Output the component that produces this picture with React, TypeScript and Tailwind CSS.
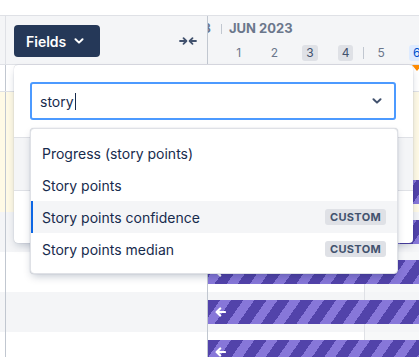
import React from 'react';

type Row = { h: string; bg: string; bar?: boolean; tint?: boolean; today?: boolean };

const rows: Row[] = [
  { h: 'h-[27px] border-b border-[#dfe1e6]', bg: 'bg-white', today: true },
  { h: 'h-[40px]', bg: 'bg-[#fffae6]' },
  { h: 'h-[40px]', bg: 'bg-[#fffae6]' },
  { h: 'h-[40px]', bg: 'bg-[#fffae6]', bar: true },
  { h: 'h-[40px]', bg: 'bg-[#f4f5f7]', bar: true },
  { h: 'h-[40px]', bg: 'bg-white', bar: true, tint: true },
  { h: 'h-[40px]', bg: 'bg-[#f4f5f7]', bar: true },
  { h: 'h-[40px]', bg: 'bg-white', bar: true, tint: true },
];

const days = [
  { n: '1' },
  { n: '2' },
  { n: '3', weekend: true },
  { n: '4', weekend: true },
  { n: '5' },
  { n: '6', today: true },
];

const options = [
  { label: 'Progress (story points)' },
  { label: 'Story points' },
  { label: 'Story points confidence', custom: true, active: true },
  { label: 'Story points median', custom: true },
];

const Chevron = ({ className }: { className?: string }) => (
  <svg width="10" height="6" viewBox="0 0 10 6" className={className} fill="none">
    <path d="M1.5 1.2 5 4.6l3.5-3.4" stroke="currentColor" strokeWidth="2" strokeLinecap="round" strokeLinejoin="round" />
  </svg>
);

const CollapseIcon = () => (
  <svg width="18" height="10" viewBox="0 0 18 10" fill="none" className="text-[#42526e]">
    {/* arrow pointing right */}
    <path d="M1 5h6M4.5 2.2 7.4 5 4.5 7.8" stroke="currentColor" strokeWidth="1.8" strokeLinecap="round" strokeLinejoin="round" />
    {/* arrow pointing left */}
    <path d="M17 5h-6M13.5 2.2 10.6 5l2.9 2.8" stroke="currentColor" strokeWidth="1.8" strokeLinecap="round" strokeLinejoin="round" />
  </svg>
);

const BarArrow = () => (
  <svg width="11" height="10" viewBox="0 0 11 10" fill="none">
    <path d="M10 5H2M5.2 1.5 1.6 5l3.6 3.5" stroke="white" strokeWidth="2.2" strokeLinecap="round" strokeLinejoin="round" />
  </svg>
);

const App = () => {
  return (
    <div className="relative w-[419px] h-[357px] overflow-hidden bg-white font-['Inter',sans-serif] text-[#172b4d]">
      {/* top strip */}
      <div className="h-[16px] border-b border-[#dfe1e6]" />

      {/* header */}
      <div className="flex h-[49px] bg-[#f4f5f7] border-b border-[#dfe1e6]">
        <div className="w-[208px] flex border-r border-[#c1c7d0]">
          <div className="w-[5px]" />
          <div className="flex-1 flex items-center justify-between pl-[8px] pr-[10px] pt-[2px] border-l border-[#dfe1e6]">
            <button className="h-8 w-[86px] rounded-[4px] bg-[#253858] text-white text-[14px] font-semibold flex items-center pl-3 gap-[8px]">
              Fields
              <Chevron className="text-white" />
            </button>
            <CollapseIcon />
          </div>
        </div>
        <div className="flex-1 flex flex-col overflow-hidden">
          <div className="h-[25px] flex items-center text-[13px] font-bold text-[#6b778c] pt-[1px]">
            <div className="w-[13px] shrink-0 overflow-hidden flex justify-end pr-[10px] whitespace-nowrap">3</div>
            <div className="w-px h-[10px] bg-[#c1c7d0] shrink-0" />
            <div className="pl-[7px] whitespace-nowrap">JUN 2023</div>
          </div>
          <div className="h-[23px] flex items-center text-[12px] text-[#6b778c] pt-[1px]">
            <div className="w-[13px] shrink-0" />
            {days.map((d, i) => (
              <React.Fragment key={d.n}>
                {i === 4 && <div className="w-px h-[12px] bg-[#c1c7d0] shrink-0 -mr-px" />}
                <div className="w-[35.6px] shrink-0 flex justify-center">
                  <span
                    className={
                      d.today
                        ? 'px-[4px] h-4 leading-4 rounded-[3px] bg-[#deebff] text-[#0052cc]'
                        : d.weekend
                        ? 'px-[4px] h-4 leading-4 rounded-[3px] bg-[#dfe1e6] text-[#42526e]'
                        : 'px-[4px] h-4 leading-4'
                    }
                  >
                    {d.n}
                  </span>
                </div>
              </React.Fragment>
            ))}
          </div>
        </div>
      </div>

      {/* body rows */}
      {rows.map((r, i) => (
        <div key={i} className={`flex ${r.h} ${r.bg}`}>
          <div className="w-[208px] flex border-r border-[#c1c7d0]">
            <div className="w-[5px]" />
            <div className="flex-1 border-l border-[#c1c7d0]" />
          </div>
          <div className="relative flex-1 flex">
            <div className="w-[156px]" />
            <div className={`flex-1 border-l border-[#dfe1e6] ${r.tint ? 'bg-[#f7f8f9]' : ''}`} />
            {r.today && (
              <div className="absolute left-[204px] top-0 w-0 h-0 border-l-[5px] border-r-[5px] border-t-[6px] border-l-transparent border-r-transparent border-t-[#ff8b00]" />
            )}
            {r.bar && (
              <div className="absolute left-0 right-0 top-2 h-6 flex items-center pl-[7px] bg-[repeating-linear-gradient(125deg,#5243aa_0px,#5243aa_10px,#8777d9_10px,#8777d9_19px)]">
                <BarArrow />
              </div>
            )}
          </div>
        </div>
      ))}

      {/* field picker popover */}
      <div className="absolute left-[14px] top-[65px] w-[399px] h-[178px] bg-white rounded-[4px] shadow-[0_4px_8px_-2px_rgba(9,30,66,0.25),0_0_1px_rgba(9,30,66,0.31)] overflow-hidden">
        <div className="px-4 pt-[17px]">
          <div className="h-[38px] w-[366px] border-2 border-[#4c9aff] rounded-[3px] flex items-center justify-between pl-2 pr-[12px]">
            <div className="flex items-center text-[14px]">
              story
              <span className="w-px h-[17px] bg-[#172b4d] ml-px" />
            </div>
            <Chevron className="text-[#42526e]" />
          </div>
        </div>
        <div className="mt-[17px] h-[54px] bg-[#f4f5f7] border-y border-[#dfe1e6]" />
      </div>

      {/* options list */}
      <div className="absolute left-[30px] top-[128px] w-[368px] bg-white border border-[#dfe1e6] rounded-[4px] py-2 shadow-[0_4px_8px_-2px_rgba(9,30,66,0.25),0_0_1px_rgba(9,30,66,0.31)]">
        {options.map(o => (
          <div
            key={o.label}
            className={`h-8 flex items-center justify-between pl-[11px] pr-[11px] text-[14px] ${
              o.active ? 'bg-[#f4f5f7] shadow-[inset_2px_0_0_#0c66e4]' : ''
            }`}
          >
            <span>{o.label}</span>
            {o.custom && (
              <span className="h-4 px-[5px] rounded-[3px] bg-[#dfe1e6] text-[#42526e] text-[11px] font-bold leading-4 tracking-[0.3px]">
                CUSTOM
              </span>
            )}
          </div>
        ))}
      </div>
    </div>
  );
};

export default App;
